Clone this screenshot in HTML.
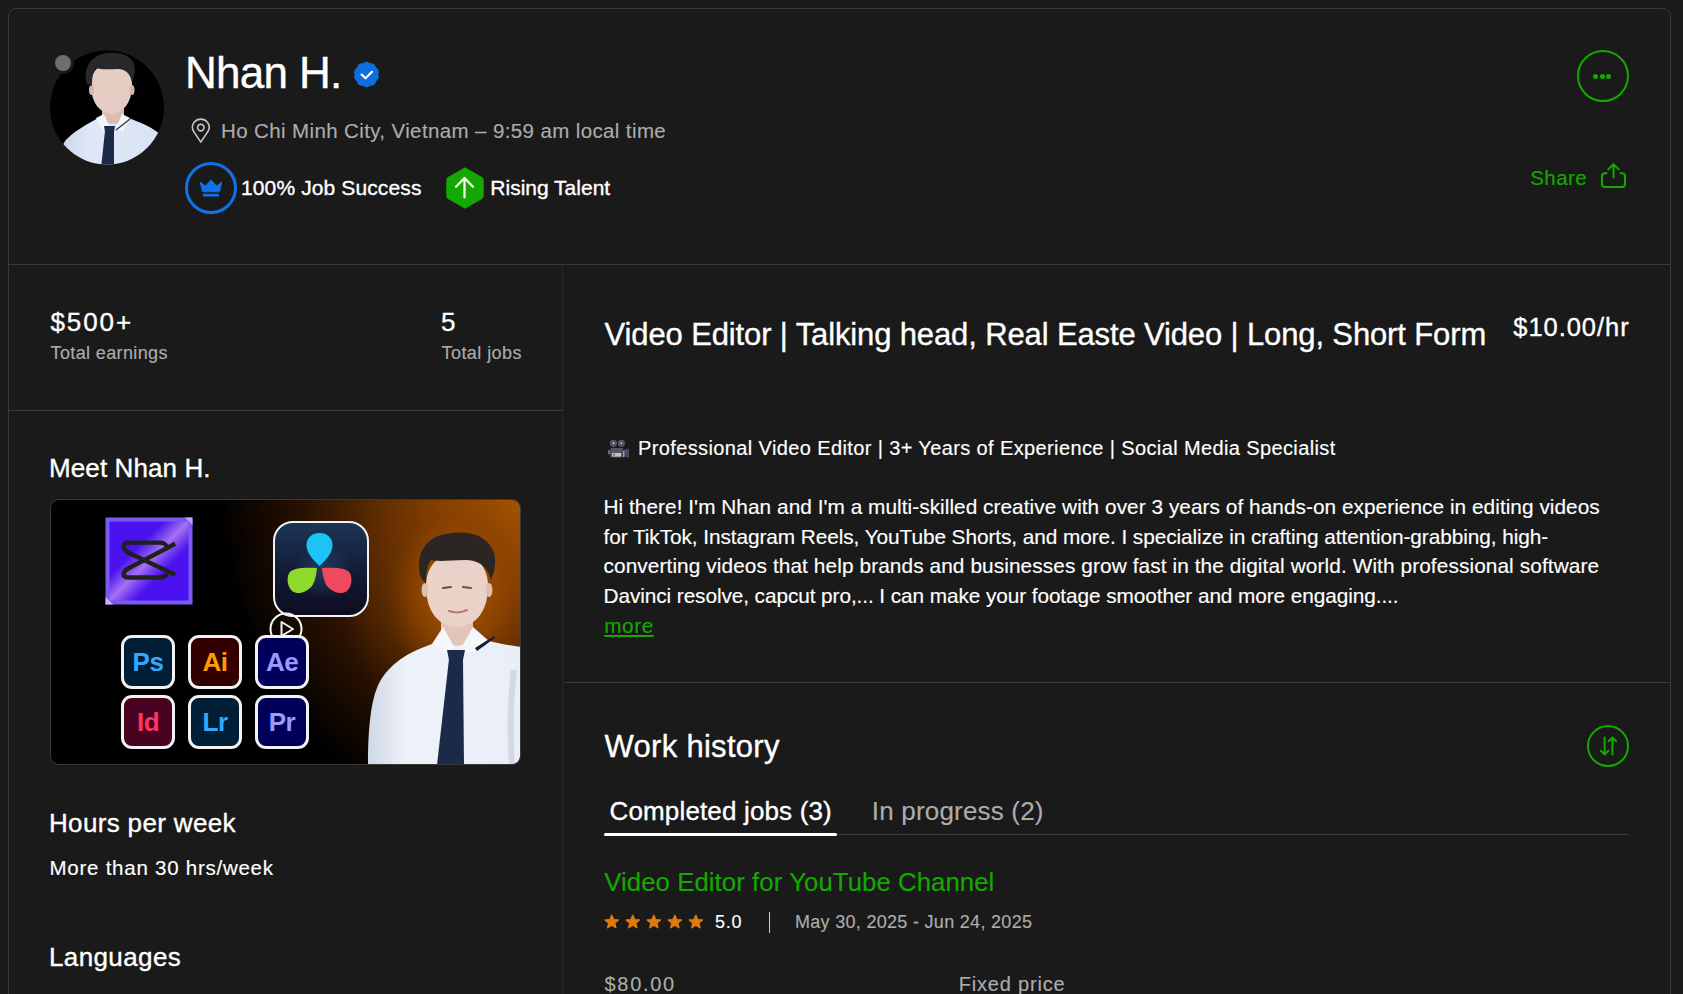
<!DOCTYPE html>
<html><head><meta charset="utf-8">
<style>
html,body{margin:0;padding:0;}
body{width:1683px;height:994px;background:#1a1a1a;position:relative;overflow:hidden;font-family:"Liberation Sans",sans-serif;color:#fff;}
.a{position:absolute;white-space:nowrap;line-height:1;}
.card{position:absolute;left:8px;top:8px;width:1663px;height:1100px;border:1px solid #3a3a3a;border-radius:8px;box-sizing:border-box;}
.hl{position:absolute;height:1px;background:#3a3a3a;}
.vl{position:absolute;width:1px;background:#252525;}
.g{color:#14a800;}
.ad{position:absolute;width:54px;height:54px;border:3px solid #f2f2f2;border-radius:11px;box-sizing:border-box;font:bold 26px/48px "Liberation Sans",sans-serif;text-align:center;letter-spacing:-0.5px;}
.gr{color:#acacac;}
</style></head>
<body>
<div class="card"></div>
<div class="hl" style="left:9px;top:264px;width:1661px;"></div>
<div class="vl" style="left:562px;top:265px;height:740px;"></div>
<div class="hl" style="left:9px;top:410px;width:554px;"></div>
<div class="hl" style="left:564px;top:682px;width:1106px;"></div>

<!-- avatar -->
<svg class="a" style="left:50px;top:50px" width="114" height="115" viewBox="0 0 114 115">
  <defs><clipPath id="av"><circle cx="57" cy="57.5" r="57"/></clipPath>
  <linearGradient id="avs" x1="0" y1="0" x2="1" y2="0"><stop offset="0" stop-color="#c9d5ec"/><stop offset="0.3" stop-color="#dfe8f8"/><stop offset="1" stop-color="#d8e2f5"/></linearGradient></defs>
  <circle cx="57" cy="57.5" r="57" fill="#000"/>
  <g clip-path="url(#av)">
    <path d="M8 118 C10 100 13 92 18 88 C26 80 38 74 48 68 L78 68 C90 72 104 78 112 86 L118 118 Z" fill="url(#avs)"/>
    <path d="M52 56 L52 70 C56 75 70 75 74 70 L74 56 Z" fill="#dcbcb0"/>
    <path d="M46 68 L54 64 L60 78 L53 82 Z" fill="#f2f5fa"/>
    <path d="M80 68 L72 64 L66 78 L73 82 Z" fill="#f2f5fa"/>
    <path d="M66 80 L80 69" stroke="#2a3042" stroke-width="1.2"/>
    <path d="M54 76 L65 76 L64 82 L55 82 Z" fill="#1f2c4c"/>
    <path d="M55 81 L64 81 L64 118 L51 118 Z" fill="#1c2a4a"/>
    <path d="M41 34 C41 20 50 14 61.5 14 C73 14 82 20 82 34 C82 50 76 62 61.5 64 C47 62 41 50 41 34 Z" fill="#e6cdc4"/>
    <ellipse cx="41.5" cy="40" rx="2.5" ry="5" fill="#d8b4a6"/>
    <ellipse cx="82" cy="40" rx="2.5" ry="5" fill="#d8b4a6"/>
    <path d="M37 34 C33 22 38 8 52 4 C64 1 78 3 83 12 C86 18 85 26 82 32 C80 24 76 19 68 19 C60 19 52 20 46 18 C43 22 42 26 42 36 Z" fill="#28272b"/>
  </g>
</svg>
<div class="a" style="left:55px;top:55px;width:16px;height:16px;border-radius:50%;background:#6e6e6e;box-shadow:0 0 0 3px #1a1a1a;"></div>

<div class="a" id="name" style="left:185px;top:51.3px;font-size:44px;letter-spacing:-0.7px;-webkit-text-stroke:0.35px currentColor;">Nhan H.</div>
<!-- verified -->
<svg class="a" style="left:353px;top:61.2px" width="27" height="27" viewBox="0 0 25 25">
  <path d="M9.13 2.13 Q12.50 -0.77 15.87 2.13 Q20.30 1.77 21.32 6.09 Q25.12 8.40 23.40 12.50 Q25.12 16.60 21.32 18.91 Q20.30 23.23 15.87 22.87 Q12.50 25.77 9.13 22.87 Q4.70 23.23 3.68 18.91 Q-0.12 16.60 1.60 12.50 Q-0.12 8.40 3.68 6.09 Q4.70 1.77 9.13 2.13 Z" fill="#0d6ede"/>
  <path d="M8 12.6 L11.6 16 L17.6 10" fill="none" stroke="#fff" stroke-width="2" stroke-linecap="round" stroke-linejoin="round"/>
</svg>

<!-- pin -->
<svg class="a" style="left:190.7px;top:117.7px" width="19.6" height="26" viewBox="0 0 22 28" preserveAspectRatio="none">
  <path d="M11 26 L3.2 14.8 C1 11.5 1.2 7.5 3.6 4.6 C5.4 2.4 8 1.2 11 1.2 C14 1.2 16.6 2.4 18.4 4.6 C20.8 7.5 21 11.5 18.8 14.8 Z" fill="none" stroke="#c4c4c4" stroke-width="1.8" stroke-linejoin="round"/>
  <circle cx="11" cy="10.3" r="3.6" fill="none" stroke="#c4c4c4" stroke-width="1.8"/>
</svg>
<div class="a gr" id="loc" style="left:221px;top:120.9px;font-size:20.5px;letter-spacing:0.38px;-webkit-text-stroke:0.15px currentColor;">Ho Chi Minh City, Vietnam – 9:59 am local time</div>

<!-- job success badge -->
<div class="a" style="left:185px;top:162px;width:52px;height:52px;border-radius:50%;border:3px solid #1271e6;box-sizing:border-box;"></div>
<svg class="a" style="left:199px;top:178px" width="24" height="20" viewBox="0 0 24 20">
  <path d="M1.2 4 L6.5 8 L12 1.8 L17.5 8 L22.8 4 L20.6 13.8 L3.4 13.8 Z" fill="#1271e6" stroke="#1271e6" stroke-width="0.8" stroke-linejoin="round"/>
  <rect x="4" y="15.8" width="16" height="2.7" fill="#1271e6"/>
</svg>
<div class="a" id="js" style="left:241px;top:177.1px;font-size:21px;letter-spacing:0.12px;-webkit-text-stroke:0.35px currentColor;">100% Job Success</div>

<!-- rising talent -->
<svg class="a" style="left:446px;top:167px" width="38" height="42" viewBox="0 0 38 42">
  <path d="M19 1.2 L35.6 10.6 C36.4 11 37 12 37 13 L37 29 C37 30 36.4 31 35.6 31.4 L19 40.8 L2.4 31.4 C1.6 31 1 30 1 29 L1 13 C1 12 1.6 11 2.4 10.6 Z" fill="#14a800" stroke="#14a800" stroke-width="1.5" stroke-linejoin="round"/>
  <path d="M18.5 30.5 L18.5 11.5 M10 19.8 L18.5 11 L27 19.8" fill="none" stroke="#fff" stroke-width="2.2" stroke-linecap="round" stroke-linejoin="round"/>
</svg>
<div class="a" id="rt" style="left:490.3px;top:177.3px;font-size:21px;-webkit-text-stroke:0.35px currentColor;">Rising Talent</div>

<!-- more button -->
<div class="a" style="left:1577px;top:50px;width:52px;height:52px;border-radius:50%;border:2px solid #14a800;box-sizing:border-box;"></div>
<div class="a" style="left:1593.4px;top:73.9px;width:5px;height:5px;border-radius:50%;background:#14a800;"></div>
<div class="a" style="left:1599.8px;top:73.9px;width:5px;height:5px;border-radius:50%;background:#14a800;"></div>
<div class="a" style="left:1606.3px;top:73.9px;width:5px;height:5px;border-radius:50%;background:#14a800;"></div>

<!-- share -->
<div class="a g" id="share" style="left:1530.2px;top:168.2px;font-size:20.5px;letter-spacing:0.45px;-webkit-text-stroke:0.15px currentColor;">Share</div>
<svg class="a" style="left:1599px;top:161px" width="29" height="29" viewBox="0 0 29 29">
  <path d="M7.5 12.3 L5.8 12.3 C4 12.3 3 13.3 3 15.1 L3 23.2 C3 25 4 26 5.8 26 L23.2 26 C25 26 26 25 26 23.2 L26 15.1 C26 13.3 25 12.3 23.2 12.3 L21.5 12.3" fill="none" stroke="#14a800" stroke-width="2" stroke-linecap="round" stroke-linejoin="round"/>
  <path d="M14.5 16.6 L14.5 3.2 M9.3 8.4 L14.5 3.2 L19.7 8.4" fill="none" stroke="#14a800" stroke-width="2" stroke-linecap="round" stroke-linejoin="round"/>
</svg>

<!-- stats -->
<div class="a" id="earn" style="left:50.5px;top:308.8px;font-size:26px;letter-spacing:1.9px;-webkit-text-stroke:0.35px currentColor;">$500+</div>
<div class="a gr" id="te" style="left:50.5px;top:343.6px;font-size:18px;letter-spacing:0.38px;-webkit-text-stroke:0.15px currentColor;">Total earnings</div>
<div class="a" style="left:441px;top:308.8px;font-size:26px;-webkit-text-stroke:0.35px currentColor;">5</div>
<div class="a gr" style="left:441.5px;top:343.6px;font-size:18px;letter-spacing:0.44px;-webkit-text-stroke:0.15px currentColor;">Total jobs</div>

<div class="a" id="meet" style="left:49px;top:454.6px;font-size:26px;letter-spacing:0.1px;-webkit-text-stroke:0.35px currentColor;">Meet Nhan H.</div>

<!-- video thumb -->
<div class="a" id="thumb" style="left:50px;top:499px;width:471px;height:266px;border-radius:9px;overflow:hidden;background:#000;border:1px solid #3a3a3a;box-sizing:border-box;">
  <div style="position:absolute;left:0;top:0;width:470px;height:265px;background:radial-gradient(ellipse 300px 330px at 470px 0px,#a85600 0%,#8d4400 25%,#5c2b00 48%,#2a1200 72%,rgba(0,0,0,0) 100%);"></div>
  <div style="position:absolute;left:0;top:0;width:470px;height:265px;background:radial-gradient(ellipse 110px 140px at 400px 95px,rgba(170,85,0,0.55) 0%,rgba(120,55,0,0.3) 55%,rgba(0,0,0,0) 100%);"></div>
  <!-- capcut -->
  <svg style="position:absolute;left:54px;top:17px" width="88" height="88" viewBox="0 0 88 88">
    <defs><linearGradient id="ccg" x1="0" y1="0" x2="1" y2="1">
      <stop offset="0" stop-color="#4a12ee"/><stop offset="0.34" stop-color="#4a12ee"/><stop offset="0.42" stop-color="#7440f0"/><stop offset="0.5" stop-color="#a670f2"/>
      <stop offset="0.58" stop-color="#7440f0"/><stop offset="0.66" stop-color="#4a12ee"/><stop offset="1" stop-color="#4a12ee"/>
    </linearGradient></defs>
    <rect x="0.5" y="0.5" width="87" height="87" fill="#7a5af5"/>
    <rect x="4.5" y="4.5" width="79" height="79" fill="url(#ccg)"/>
    <path d="M0.5 87.5 L0.5 80 L8 87.5 Z" fill="#c9b8ff"/>
    <path d="M87.5 0.5 L80 0.5 L87.5 8 Z" fill="#b9a4ff"/>
    <path d="M70.2 26.7 L23 51.5 C17 55 17 60.5 24 60.5 L54 60.5 C58 60.5 61 59 61.5 56.5 M70.2 57.7 L23 35.5 C17 32 17 25.6 24 25.6 L54 25.6 C58 25.6 61 27 61.5 29.5" fill="none" stroke="#202020" stroke-width="4.4" stroke-linecap="butt" stroke-linejoin="round"/>
  </svg>
  <!-- davinci -->
  <div style="position:absolute;left:222px;top:21px;width:96px;height:96px;border-radius:20px;border:2.5px solid #f2f2f2;box-sizing:border-box;background:linear-gradient(180deg,#1c3556 0%,#121a35 55%,#0d0c20 100%);overflow:hidden;">
    <div style="position:absolute;left:18px;top:18px;width:60px;height:60px;border-radius:50%;background:radial-gradient(circle,rgba(60,110,160,0.35),rgba(0,0,0,0) 70%);"></div>
    <svg style="position:absolute;left:0;top:0" width="92" height="92" viewBox="0 0 92 92">
      <path d="M44.5 43 C38 37 31.5 30 31.5 22 C31.5 14.5 37.5 10 44.5 10 C51.5 10 57.5 14.5 57.5 22 C57.5 30 51 37 44.5 43 Z" fill="#1bc4f4"/>
      <path d="M42 45 C34 44.5 22 44 16 48 C11 52 11.5 63 17 68 C23 72.5 32 69 37 63 C40 58.5 41.5 51 42 45 Z" fill="#8ed92c"/>
      <path d="M47 45 C55 44.5 67 44 73 48 C78 52 77.5 63 72 68 C66 72.5 57 69 52 63 C49 58.5 47.5 51 47 45 Z" fill="#ee4a5e"/>
    </svg>
  </div>
  <!-- play -->
  <svg style="position:absolute;left:218px;top:112px" width="34" height="34" viewBox="0 0 34 34">
    <circle cx="17" cy="17" r="15.5" fill="none" stroke="#f5f5f5" stroke-width="2"/>
    <path d="M12.5 10 L24 17 L12.5 24 Z" fill="none" stroke="#f5f5f5" stroke-width="2" stroke-linejoin="round"/>
  </svg>
  <!-- adobe -->
  <div class="ad" style="left:70px;top:135px;background:#001e36;color:#31a8ff;">Ps</div>
  <div class="ad" style="left:137px;top:135px;background:#330000;color:#ff9a00;">Ai</div>
  <div class="ad" style="left:204px;top:135px;background:#00005b;color:#9999ff;">Ae</div>
  <div class="ad" style="left:70px;top:195px;background:#49021f;color:#ff3366;">Id</div>
  <div class="ad" style="left:137px;top:195px;background:#001e36;color:#31a8ff;">Lr</div>
  <div class="ad" style="left:204px;top:195px;background:#00005b;color:#9999ff;">Pr</div>
  <!-- person -->
  <svg style="position:absolute;left:300px;top:20px" width="170" height="245" viewBox="0 0 170 245">
    <defs>
      <radialGradient id="halo" cx="0.5" cy="0.5" r="0.5"><stop offset="0" stop-color="#b35a00" stop-opacity="0.75"/><stop offset="0.6" stop-color="#a04e00" stop-opacity="0.4"/><stop offset="1" stop-color="#8a4000" stop-opacity="0"/></radialGradient>
      <linearGradient id="shirt" x1="0" y1="0" x2="1" y2="0"><stop offset="0" stop-color="#cfd8e6"/><stop offset="0.25" stop-color="#eef2f9"/><stop offset="1" stop-color="#e9eef7"/></linearGradient>
    </defs>
    <ellipse cx="106" cy="80" rx="70" ry="90" fill="url(#halo)"/>
    <path d="M17 245 C17 215 19 185 26 168 C34 148 52 134 81 124 L92 116 L124 116 L142 122 C156 125 164 126 170 127 L170 245 Z" fill="url(#shirt)"/>
    <path d="M160 150 C156 180 156 215 158 245 L164 245 C162 215 162 180 166 150 Z" fill="#c7cfdc" opacity="0.7"/>
    <path d="M90 96 L90 118 C96 128 116 128 122 118 L122 96 Z" fill="#e2c4b8"/>
    <path d="M81 124 L92 107 L104 128 L95 134 Z" fill="#f4f6fa"/>
    <path d="M139 122 L122 107 L110 128 L120 133 Z" fill="#f4f6fa"/>
    <path d="M124 128 L143 116 L144 118 L126 131 Z" fill="#1a1e30"/>
    <path d="M96 130 L114 130 L112 140 L98 140 Z" fill="#1e2b4a"/>
    <path d="M98 139 L112 139 L113 245 L86 245 Z" fill="#1c2a4a"/>
    <path d="M75 66 C75 46 88 33 106 33 C124 33 137 46 137 66 C137 90 126 106 106 107 C86 106 75 90 75 66 Z" fill="#ead2c8"/>
    <ellipse cx="74" cy="70" rx="3.5" ry="7" fill="#e0bfb2"/>
    <ellipse cx="138" cy="70" rx="3.5" ry="7" fill="#e0bfb2"/>
    <path d="M70 58 C64 38 72 18 94 14 C114 10 134 13 142 30 C146 40 144 50 140 60 C136 46 128 40 114 40 C100 40 88 42 80 40 C76 46 75 52 75 64 Z" fill="#2b2624"/>
    <path d="M92 68 L100 67 M112 67 L120 68" stroke="#6b4e44" stroke-width="2" stroke-linecap="round"/>
    <path d="M98 91 C104 93 110 93 116 90" stroke="#b47a6a" stroke-width="2" fill="none" stroke-linecap="round"/>
  </svg>
</div>

<div class="a" id="hours" style="left:49px;top:809.5px;font-size:26px;letter-spacing:0.34px;-webkit-text-stroke:0.35px currentColor;">Hours per week</div>
<div class="a" id="more30" style="left:49.5px;top:858.2px;font-size:20.5px;letter-spacing:0.75px;-webkit-text-stroke:0.15px currentColor;">More than 30 hrs/week</div>
<div class="a" id="lang" style="left:49px;top:943.5px;font-size:26px;letter-spacing:0.38px;-webkit-text-stroke:0.35px currentColor;">Languages</div>

<!-- right column -->
<div class="a" id="title" style="left:604.6px;top:318.9px;font-size:31px;letter-spacing:-0.13px;-webkit-text-stroke:0.35px currentColor;">Video Editor | Talking head, Real Easte Video | Long, Short Form</div>
<div class="a" id="rate" style="left:1513.3px;top:315.0px;font-size:25.5px;letter-spacing:0.95px;-webkit-text-stroke:0.35px currentColor;">$10.00/hr</div>

<svg class="a" style="left:607px;top:439px" width="24" height="20" viewBox="0 0 24 20">
  <circle cx="6.5" cy="4.3" r="3.6" fill="#55535f"/><circle cx="14.4" cy="4.3" r="3.6" fill="#55535f"/>
  <circle cx="6.5" cy="4.3" r="1" fill="#c8c8d0"/><circle cx="14.4" cy="4.3" r="1" fill="#9fb8d0"/>
  <rect x="3.3" y="9" width="12.6" height="9.5" rx="1" fill="#55535f"/>
  <path d="M15.9 11 L22 9.4 L22 18.8 L15.9 17 Z" fill="#4a4858"/>
  <path d="M1 11 L3.3 11.5 L3.3 15 L1 15.5 Z" fill="#6a6874"/>
  <rect x="5" y="14" width="9" height="3.6" fill="#b9c2cf"/><circle cx="7" cy="15.8" r="1" fill="#e23"/>
  <rect x="15.9" y="12" width="1.6" height="6" fill="#a08ad8"/>
</svg>
<div class="a" id="summ" style="left:638px;top:437.8px;font-size:20px;letter-spacing:0.38px;-webkit-text-stroke:0.15px currentColor;">Professional Video Editor | 3+ Years of Experience | Social Media Specialist</div>
<div class="a" id="para" style="left:603px;top:496.3px;font-size:20.8px;line-height:30px;">
</div>
<div class="a" id="p1" style="left:603.5px;top:497.3px;font-size:20.8px;letter-spacing:0.042px;-webkit-text-stroke:0.15px currentColor;">Hi there! I'm Nhan and I'm a multi-skilled creative with over 3 years of hands-on experience in editing videos</div>
<div class="a" id="p2" style="left:603.5px;top:526.5px;font-size:20.8px;letter-spacing:-0.069px;-webkit-text-stroke:0.15px currentColor;">for TikTok, Instagram Reels, YouTube Shorts, and more. I specialize in crafting attention-grabbing, high-</div>
<div class="a" id="p3" style="left:603.5px;top:556.2px;font-size:20.8px;letter-spacing:0.099px;-webkit-text-stroke:0.15px currentColor;">converting videos that help brands and businesses grow fast in the digital world. With professional software</div>
<div class="a" id="p4" style="left:603.5px;top:585.9px;font-size:20.8px;letter-spacing:-0.085px;-webkit-text-stroke:0.15px currentColor;">Davinci resolve, capcut pro,... I can make your footage smoother and more engaging....</div>
<div class="a g" id="more" style="left:604.2px;top:616.2px;font-size:20.8px;letter-spacing:0.567px;text-decoration:underline;-webkit-text-stroke:0.15px currentColor;">more</div>

<div class="a" id="wh" style="left:604.5px;top:730.5px;font-size:31px;letter-spacing:0.3px;-webkit-text-stroke:0.35px currentColor;">Work history</div>
<div class="a" style="left:1587px;top:724.6px;width:42px;height:42px;border-radius:50%;border:2px solid #14a800;box-sizing:border-box;"></div>
<svg class="a" style="left:1596px;top:733.5px" width="24" height="24" viewBox="0 0 24 24">
  <path d="M8.6 3.5 L8.6 20.5 M4.8 16.8 L8.6 20.5 L12.4 16.8" fill="none" stroke="#14a800" stroke-width="2" stroke-linecap="round" stroke-linejoin="round"/>
  <path d="M16.4 20.5 L16.4 3.5 M12.6 7.2 L16.4 3.5 L20.2 7.2" fill="none" stroke="#14a800" stroke-width="2" stroke-linecap="round" stroke-linejoin="round"/>
</svg>

<div class="a" id="tab1" style="left:609.5px;top:798.3px;font-size:26px;letter-spacing:0.15px;-webkit-text-stroke:0.35px currentColor;">Completed jobs (3)</div>
<div class="a gr" id="tab2" style="left:871.8px;top:797.5px;font-size:26px;letter-spacing:0.19px;-webkit-text-stroke:0.15px currentColor;">In progress (2)</div>
<div class="hl" style="left:604px;top:834px;width:1025px;background:#3a3a3a;"></div>
<div class="a" style="left:604px;top:833px;width:233px;height:3px;border-radius:2px;background:#fff;"></div>

<div class="a g" id="job" style="left:604.2px;top:870.3px;font-size:25.7px;letter-spacing:0.1px;-webkit-text-stroke:0.15px currentColor;">Video Editor for YouTube Channel</div>
<svg class="a" id="stars" style="left:603.7px;top:913.9px" width="100" height="16" viewBox="0 0 100 16"><path transform="translate(0.00 0)" d="M7.75 1.2 L9.7 5.6 L14.4 6 L10.8 9.1 L11.9 13.8 L7.75 11.3 L3.6 13.8 L4.7 9.1 L1.1 6 L5.8 5.6 Z" fill="#df7a0d" stroke="#df7a0d" stroke-width="1.3" stroke-linejoin="round"/><path transform="translate(21.03 0)" d="M7.75 1.2 L9.7 5.6 L14.4 6 L10.8 9.1 L11.9 13.8 L7.75 11.3 L3.6 13.8 L4.7 9.1 L1.1 6 L5.8 5.6 Z" fill="#df7a0d" stroke="#df7a0d" stroke-width="1.3" stroke-linejoin="round"/><path transform="translate(42.06 0)" d="M7.75 1.2 L9.7 5.6 L14.4 6 L10.8 9.1 L11.9 13.8 L7.75 11.3 L3.6 13.8 L4.7 9.1 L1.1 6 L5.8 5.6 Z" fill="#df7a0d" stroke="#df7a0d" stroke-width="1.3" stroke-linejoin="round"/><path transform="translate(63.09 0)" d="M7.75 1.2 L9.7 5.6 L14.4 6 L10.8 9.1 L11.9 13.8 L7.75 11.3 L3.6 13.8 L4.7 9.1 L1.1 6 L5.8 5.6 Z" fill="#df7a0d" stroke="#df7a0d" stroke-width="1.3" stroke-linejoin="round"/><path transform="translate(84.12 0)" d="M7.75 1.2 L9.7 5.6 L14.4 6 L10.8 9.1 L11.9 13.8 L7.75 11.3 L3.6 13.8 L4.7 9.1 L1.1 6 L5.8 5.6 Z" fill="#df7a0d" stroke="#df7a0d" stroke-width="1.3" stroke-linejoin="round"/></svg>
<div class="a" id="r50" style="left:715px;top:912.6px;font-size:18px;-webkit-text-stroke:0.15px currentColor;letter-spacing:0.7px;">5.0</div>
<div class="a" style="left:769px;top:912px;width:1px;height:21px;background:#d0d0d0;"></div>
<div class="a gr" id="date" style="left:795px;top:912.6px;font-size:18px;letter-spacing:0.3px;-webkit-text-stroke:0.15px currentColor;">May 30, 2025 - Jun 24, 2025</div>

<div class="a gr" id="amt" style="left:604.5px;top:974px;font-size:20px;letter-spacing:1.7px;-webkit-text-stroke:0.15px currentColor;">$80.00</div>
<div class="a gr" id="fp" style="left:958.8px;top:974px;font-size:20px;letter-spacing:0.8px;-webkit-text-stroke:0.15px currentColor;">Fixed price</div>
</body></html>
